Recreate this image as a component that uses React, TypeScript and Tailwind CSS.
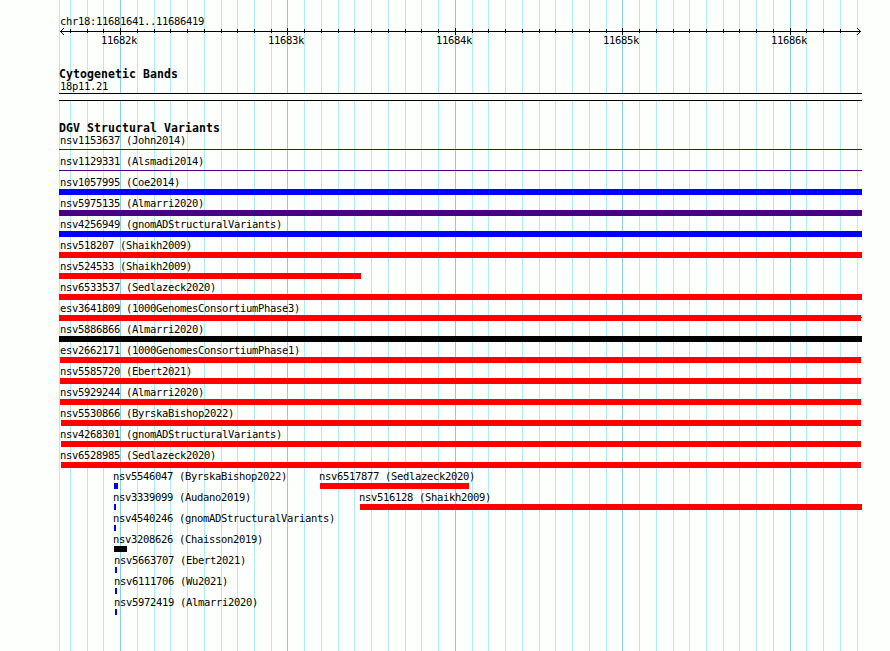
import React from 'react';

interface Feature {
  name: string;
  start: number;
  end: number;
  color: string;
  thin?: boolean;
  tail?: boolean;
}

const LEFT = 59;

const gridLines = [
  59, 70, 87, 103, 120, 137, 154, 170, 187, 204, 221, 237, 254, 271, 287, 304, 321, 338, 354, 371,
  388, 405, 421, 438, 455, 472, 488, 505, 522, 539, 555, 572, 589, 606, 622, 639, 656, 673, 689,
  706, 723, 739, 756, 773, 790, 806, 823, 840, 857,
];

const majorTicks: Record<number, string> = {
  120: '11682k',
  287: '11683k',
  455: '11684k',
  622: '11685k',
  790: '11686k',
};

const RED = 'bg-[#ff0000]';
const BLUE = 'bg-[#0000ff]';
const INDIGO = 'bg-[#4b0082]';
const BLACK = 'bg-black';

const rows: Feature[][] = [
  [{ name: 'nsv1153637 (John2014)', start: 59, end: 862, color: INDIGO, thin: true }],
  [{ name: 'nsv1129331 (Alsmadi2014)', start: 59, end: 862, color: INDIGO, thin: true }],
  [{ name: 'nsv1057995 (Coe2014)', start: 59, end: 862, color: BLUE }],
  [{ name: 'nsv5975135 (Almarri2020)', start: 59, end: 862, color: INDIGO }],
  [{ name: 'nsv4256949 (gnomADStructuralVariants)', start: 59, end: 862, color: BLUE }],
  [{ name: 'nsv518207 (Shaikh2009)', start: 59, end: 862, color: RED }],
  [{ name: 'nsv524533 (Shaikh2009)', start: 59, end: 361, color: RED }],
  [{ name: 'nsv6533537 (Sedlazeck2020)', start: 59, end: 862, color: RED }],
  [{ name: 'esv3641809 (1000GenomesConsortiumPhase3)', start: 59, end: 861, color: RED, tail: true }],
  [{ name: 'nsv5886866 (Almarri2020)', start: 59, end: 862, color: BLACK }],
  [{ name: 'esv2662171 (1000GenomesConsortiumPhase1)', start: 60, end: 861, color: RED }],
  [{ name: 'nsv5585720 (Ebert2021)', start: 60, end: 861, color: RED }],
  [{ name: 'nsv5929244 (Almarri2020)', start: 60, end: 861, color: RED }],
  [{ name: 'nsv5530866 (ByrskaBishop2022)', start: 61, end: 861, color: RED }],
  [{ name: 'nsv4268301 (gnomADStructuralVariants)', start: 61, end: 861, color: RED }],
  [{ name: 'nsv6528985 (Sedlazeck2020)', start: 61, end: 861, color: RED }],
  [
    { name: 'nsv5546047 (ByrskaBishop2022)', start: 114, end: 118, color: BLUE },
    { name: 'nsv6517877 (Sedlazeck2020)', start: 320, end: 469, color: RED },
  ],
  [
    { name: 'nsv3339099 (Audano2019)', start: 114, end: 116, color: BLUE },
    { name: 'nsv516128 (Shaikh2009)', start: 360, end: 862, color: RED },
  ],
  [{ name: 'nsv4540246 (gnomADStructuralVariants)', start: 114, end: 116, color: BLUE }],
  [{ name: 'nsv3208626 (Chaisson2019)', start: 114, end: 127, color: BLACK }],
  [{ name: 'nsv5663707 (Ebert2021)', start: 115, end: 117, color: BLUE }],
  [{ name: 'nsv6111706 (Wu2021)', start: 115, end: 117, color: BLUE }],
  [{ name: 'nsv5972419 (Almarri2020)', start: 115, end: 117, color: BLUE }],
];

function FeatureRow({ features }: { features: Feature[] }) {
  return (
    <div className="grid h-[21px] grid-cols-1">
      {features.map((f) => {
        // labels never start left of x=60
        const labelX = Math.max(60, f.start - 1);
        return (
          <div key={f.name} className="col-start-1 row-start-1">
            <div className="h-[15px] pt-[2px] whitespace-pre" style={{ marginLeft: labelX - LEFT }}>
              {f.name}
            </div>
            <div className="flex h-[6px]" style={{ marginLeft: f.start - LEFT }}>
              <div
                className={`${f.color} ${f.thin ? 'mt-[2px] h-px' : 'h-[6px]'}`}
                style={{ width: f.end - f.start }}
              />
              {f.tail && <div className={`${f.color} mt-[2px] h-px w-px`} />}
            </div>
          </div>
        );
      })}
    </div>
  );
}

function Ruler() {
  return (
    <div>
      <div className="grid h-[7px] w-[803px] grid-cols-1">
        <svg className="col-start-1 row-start-1" width="803" height="7" shapeRendering="crispEdges">
          <path d="M1 3.5H802" stroke="#000" fill="none" />
          <path
            d="M2 2h1v1h-1zM3 1h1v1h-1zM4 0h1v1h-1zM2 4h1v1h-1zM3 5h1v1h-1zM4 6h1v1h-1zM800 2h1v1h-1zM799 1h1v1h-1zM798 0h1v1h-1zM800 4h1v1h-1zM799 5h1v1h-1zM798 6h1v1h-1z"
            fill="#000"
          />
        </svg>
        {gridLines.slice(1, -1).map((x) => (
          <div
            key={x}
            className={`col-start-1 row-start-1 w-px bg-black ${majorTicks[x] ? 'h-[7px]' : 'mt-px h-[4px]'}`}
            style={{ marginLeft: x - LEFT }}
          />
        ))}
      </div>
      <div className="grid h-[14px] grid-cols-1">
        {Object.entries(majorTicks).map(([x, label]) => (
          <div
            key={x}
            className="col-start-1 row-start-1 -mt-px"
            style={{ marginLeft: Number(x) - 19 - LEFT }}
          >
            {label}
          </div>
        ))}
      </div>
    </div>
  );
}

function TrackTitle({ children }: { children: React.ReactNode }) {
  return <h2 className="h-[12px] text-[11.5px] leading-[12px] font-bold tracking-[0.08px]">{children}</h2>;
}

export default function App() {
  return (
    <div className="relative h-[651px] w-[890px] overflow-hidden bg-[#fdfffc] font-['DejaVu_Sans_Mono',monospace] text-[10.5px] leading-[12px] tracking-[-0.32px] text-black">
      {/* Grid behind every track */}
      <div className="absolute inset-0 grid grid-cols-1">
        {gridLines.map((x) => (
          <div
            key={x}
            className={`col-start-1 row-start-1 w-px ${majorTicks[x] ? 'bg-[#87ceeb]' : 'bg-[#afeeee]'}`}
            style={{ marginLeft: x }}
          />
        ))}
      </div>

      <main className="relative pt-[15px] pl-[59px]">
        <div className="h-[13px] pl-px">chr18:11681641..11686419</div>
        <Ruler />

        <section className="mt-[19px]">
          <TrackTitle>Cytogenetic Bands</TrackTitle>
          <div className="h-[13px] pl-px">18p11.21</div>
          <div className="h-[8px] w-[803px] border-y border-black bg-[#fdfffc]" />
        </section>

        <section className="mt-[21px]">
          <TrackTitle>DGV Structural Variants</TrackTitle>
          <div className="-mt-[2px]">
            {rows.map((features) => (
              <FeatureRow key={features[0].name} features={features} />
            ))}
          </div>
        </section>
      </main>
    </div>
  );
}
